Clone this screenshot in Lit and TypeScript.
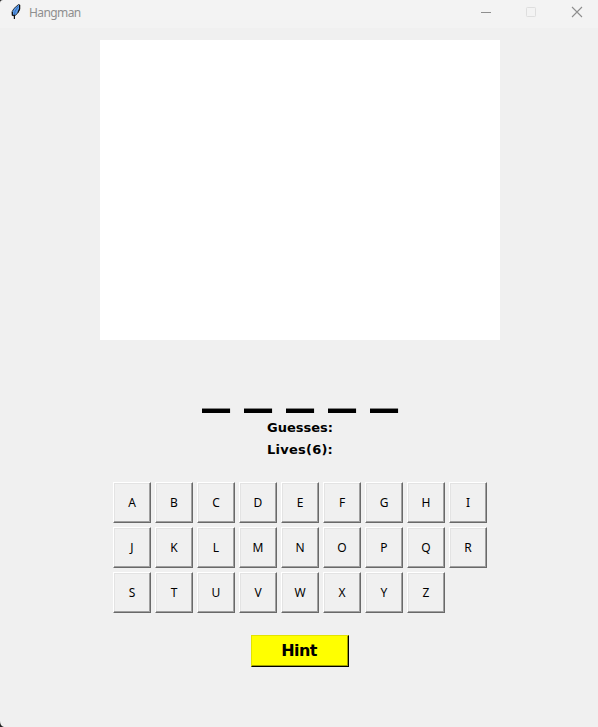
import { LitElement, html, css } from "lit";
import { customElement, property } from "lit/decorators.js";

@customElement("title-bar")
class TitleBar extends LitElement {
  static styles = css`
    :host { display: flex; height: 28px; background: #f3f3f3; align-items: flex-start; }
    .feather { width: 12px; height: 18px; margin: 3px 0 0 10px; }
    .title { flex: 1; font: 12px/16px "Noto Sans", sans-serif; letter-spacing: -0.6px; color: #8f8f8f; margin: 5px 0 0 7px; }
    .controls { display: flex; margin-right: -2px; }
    .controls svg { width: 46px; height: 28px; display: block; }
  `;
  render() {
    return html`
      <svg class="feather" viewBox="0 0 12 18">
        <path d="M8.5 1.5 L9.6 1.8 L9.6 6 L8.2 9 L6.5 11.5 L4.5 12.8 L2.4 12.5 L2.2 8.5 L4 5.5 Z" fill="#5a9bea" stroke="#222" stroke-width=".9" />
        <path d="M8 3.5 L5 8.5 L4.4 12" fill="none" stroke="#2f62a8" stroke-width=".8" />
        <path d="M2.6 12 L4.4 12.5 V16 M2.4 9 V12.5 M9.6 2 V6 L8 9.4" fill="none" stroke="#111" stroke-width="1.2" />
      </svg>
      <span class="title">Hangman</span>
      <div class="controls">
        <svg viewBox="0 0 46 28"><path d="M19 12.5H29" stroke="#8e8e8e" /></svg>
        <svg viewBox="0 0 46 28"><rect x="18.5" y="7.5" width="9" height="9" rx=".8" fill="none" stroke="#dedede" /></svg>
        <svg viewBox="0 0 46 28"><path d="M18 7L28 17M28 7L18 17" stroke="#8e8e8e" stroke-width="1.1" fill="none" /></svg>
      </div>`;
  }
}

@customElement("letter-key")
class LetterKey extends LitElement {
  @property() letter = "";
  static styles = css`
    button {
      display: block; box-sizing: border-box; width: 38px; height: 41px; padding: 0;
      background: #f0f0f0; border: 1px solid; border-color: #fff #696969 #696969 #fff;
      box-shadow: inset -1px -1px #a0a0a0, inset 1px 1px #e3e3e3;
      font: 12px/16px "Noto Sans", sans-serif; color: #000;
    }
  `;
  render() {
    return html`<button>${this.letter}</button>`;
  }
}

@customElement("app-root")
class AppRoot extends LitElement {
  static styles = css`
    :host { display: block; position: relative; width: 598px; height: 727px; background: #f0f0f0; overflow: hidden; }
    .body { display: flex; flex-direction: column; align-items: center; padding: 12px 0 0 2px; }
    .canvas { width: 400px; height: 300px; background: #fff; }
    .word { display: flex; gap: 14px; margin-top: 31px; height: 46px; font: bold 48px/29px "DejaVu Sans", sans-serif; }
    .word span { width: 28px; display: flex; justify-content: center; transform: scaleX(1.17); }
    .status { font: bold 13px/22px "DejaVu Sans", sans-serif; text-align: center; white-space: nowrap; }
    .lives { letter-spacing: 0.25px; }
    .keys { display: grid; grid-template-columns: repeat(9, 38px); gap: 4px; margin-top: 21px; }
    .hint {
      box-sizing: border-box; width: 98px; height: 32px; margin-top: 22px; padding: 0 2px 0 0;
      background: #ff0; border: 1px solid; border-color: #e3e300 #000 #000 #e3e300;
      box-shadow: inset -1px -1px #a0a000;
      font: bold 16px/20px "DejaVu Sans", sans-serif; letter-spacing: -0.6px; color: #000;
    }
    .corner { position: absolute; left: 0; width: 4px; display: block; }
    .top { top: 0; height: 4px; }
    .bottom { bottom: 0; height: 6px; }
  `;
  render() {
    return html`
      <title-bar></title-bar>
      <div class="body">
        <div class="canvas"></div>
        <div class="word">${[..."_____"].map((c) => html`<span>${c}</span>`)}</div>
        <div class="status">Guesses:</div>
        <div class="status lives">Lives(6):</div>
        <div class="keys">
          ${[..."ABCDEFGHIJKLMNOPQRSTUVWXYZ"].map((c) => html`<letter-key .letter=${c}></letter-key>`)}
        </div>
        <button class="hint">Hint</button>
      </div>
      <svg class="corner top" viewBox="0 0 4 4"><path d="M0 0H3Q0 0 0 3Z" fill="#222" /></svg>
      <svg class="corner bottom" viewBox="0 0 4 6"><path d="M0 0Q0 5 4 6H0Z" fill="#222" /></svg>`;
  }
}
